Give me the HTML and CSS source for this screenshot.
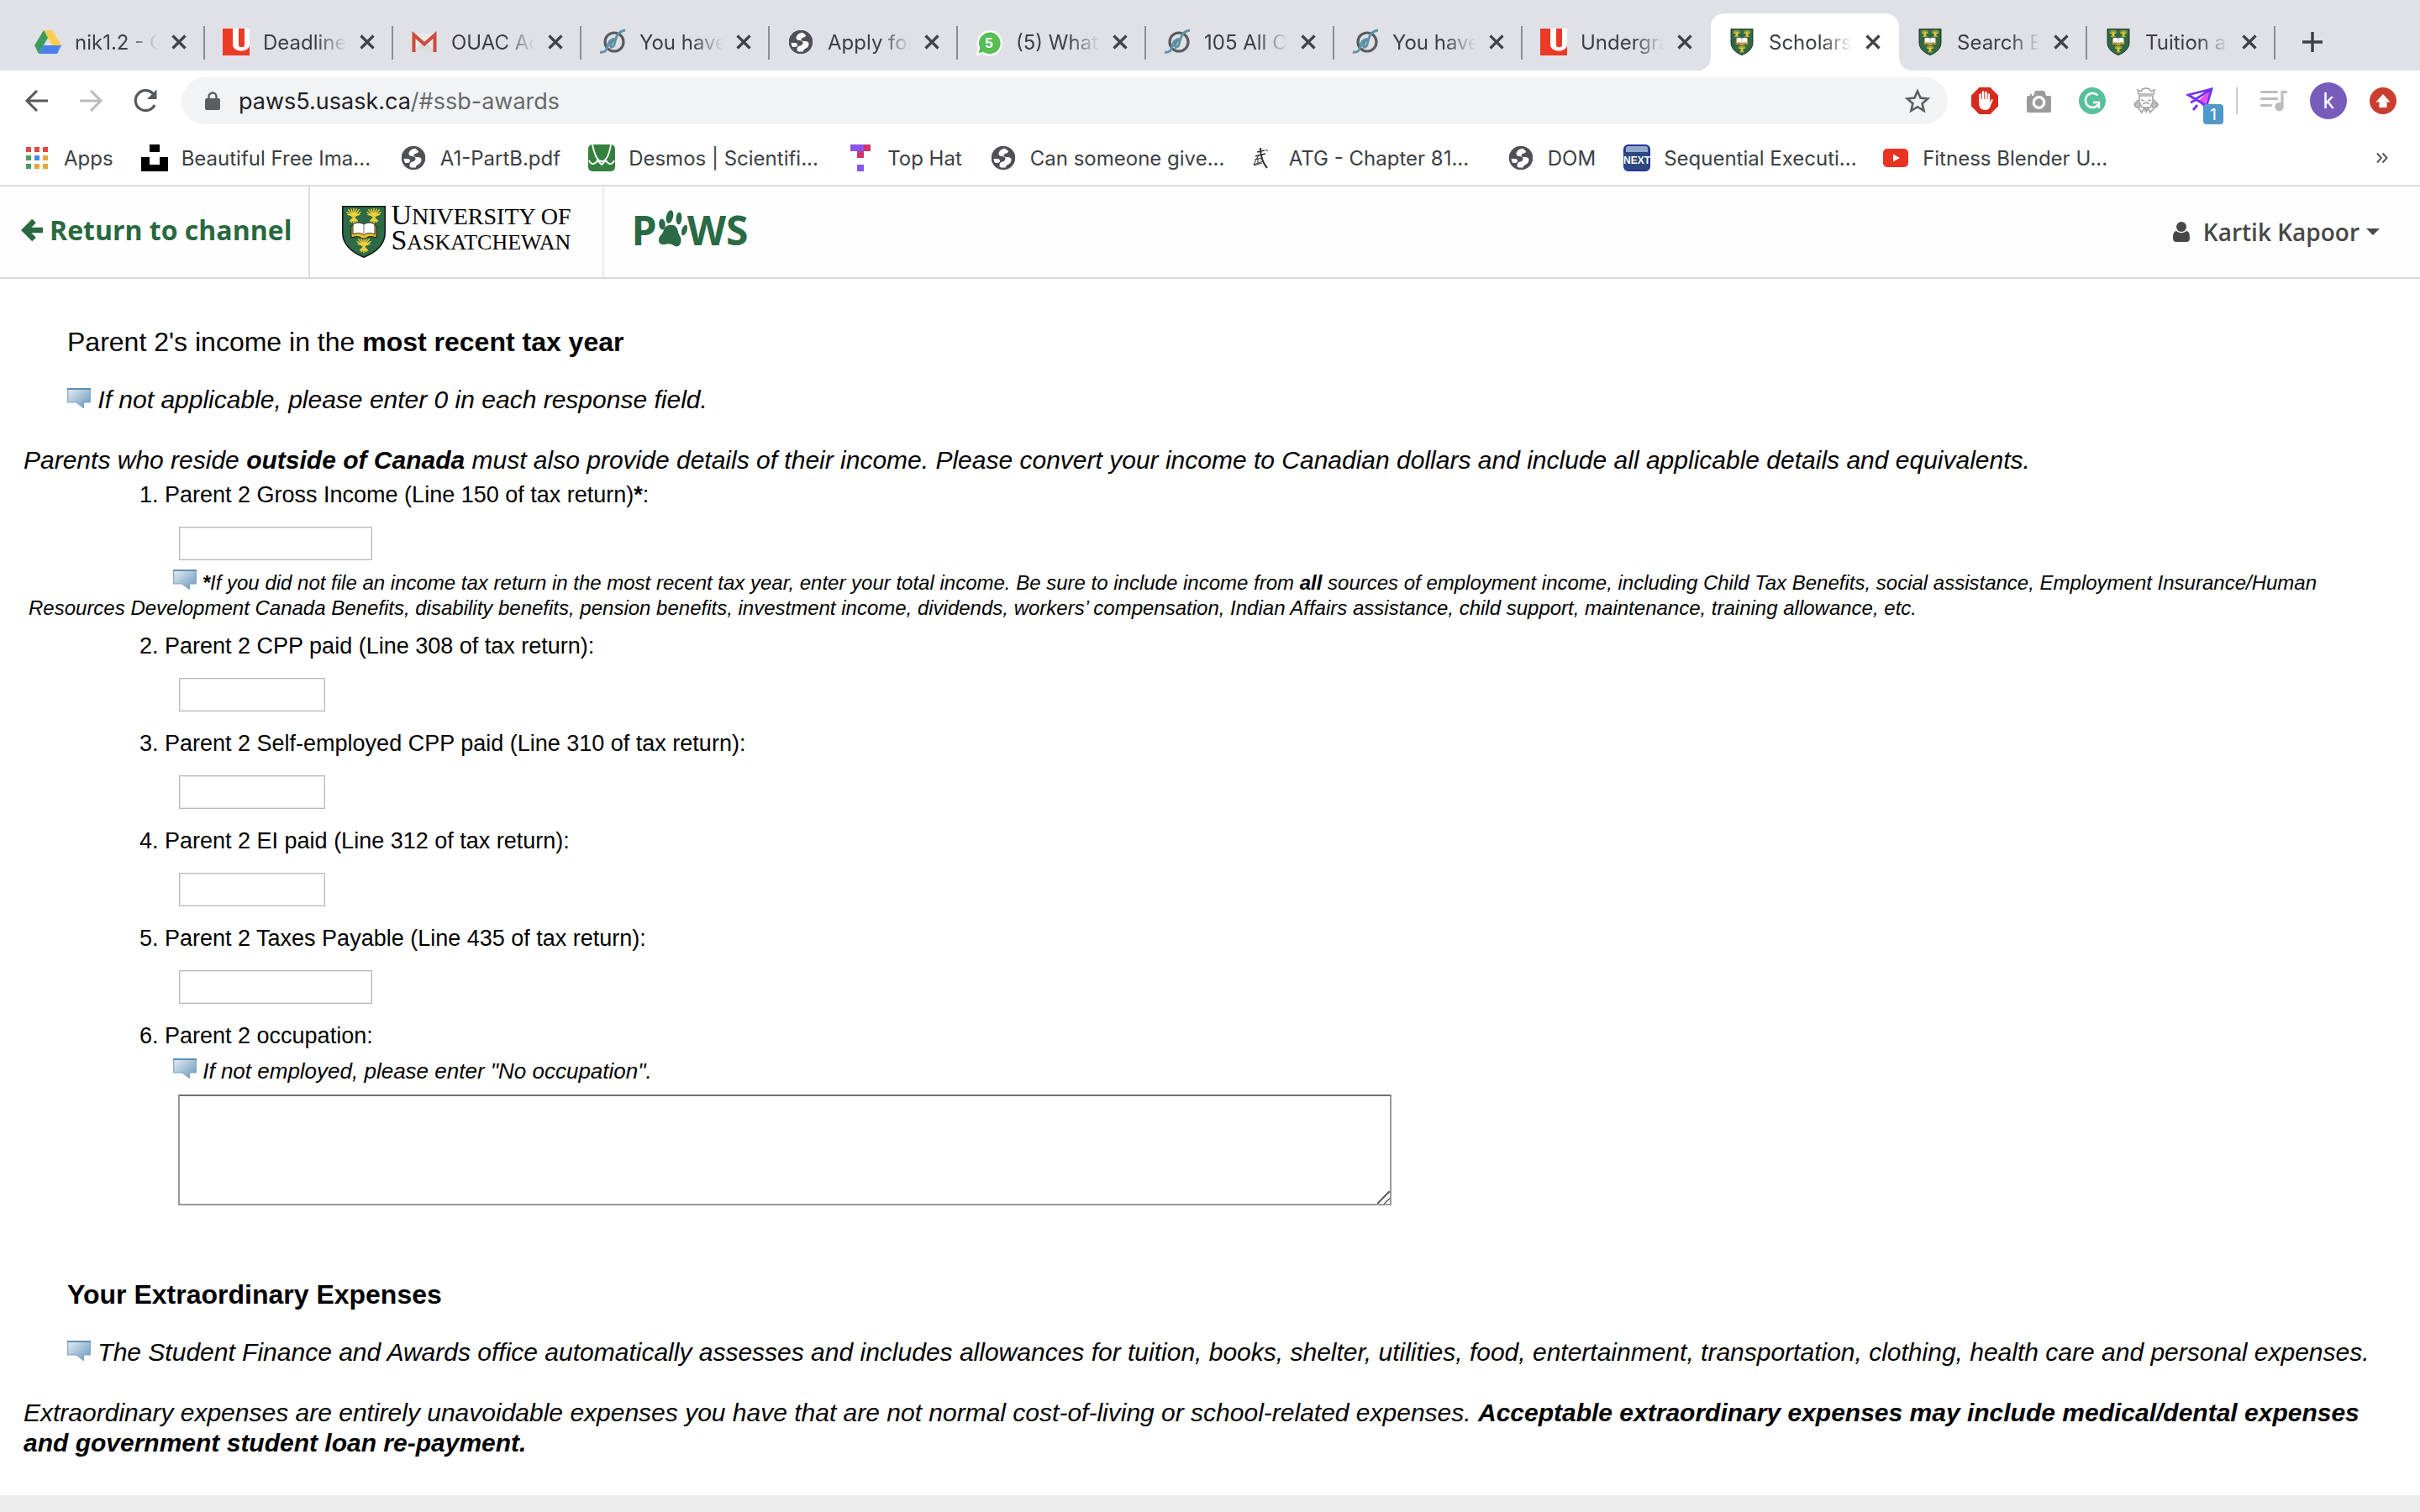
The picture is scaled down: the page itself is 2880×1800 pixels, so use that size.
FILE: index.html
```html
<!DOCTYPE html>
<html lang="en">
<head>
<meta charset="utf-8">
<meta name="viewport" content="width=device-width, initial-scale=1">
<title>Scholarships and awards</title>
<link rel="stylesheet" href="styles.css">
</head>
<body>
<svg class="defs" aria-hidden="true">
  <symbol id="close" viewBox="0 0 18 18"><path d="M1.500 1.500l15 15M16.500 1.500l-15 15" stroke="#3f4246" stroke-width="3.200"/></symbol>
  <symbol id="globe" viewBox="0 0 32 32"><circle cx="16" cy="16" r="14" fill="#505158"/><path d="M18 4.500c-4 1-7 3-7.500 6-.3 2 1.500 3.500 3.500 3.500 3 0 4.500 1 4.500 3s-1 3-3.500 3.500-3.500 2-3.500 4.500l.5 3c2 .8 5 .8 7 0-.5-2 .5-3 2.500-4 3-1.500 4-3.500 4-6 0-2-2-3-4.500-3-3 0-4.500-.5-4.500-2 0-1.300 1-2 3-2.500 2-.6 2.500-1.500 2.500-2.500z" fill="#fff"/><path d="M3 17h6c2 0 3 1 3 2.500S10.500 22 9 22H4.500z" fill="#fff"/><circle cx="16" cy="16" r="12.800" fill="none" stroke="#505158" stroke-width="2.600"/></symbol>
  <symbol id="u-logo" viewBox="0 0 32 32"><path d="M0 0h32v32H0z" fill="#ec3a25"/><path d="M12 0v19c0 10 20 10 20 0V0h-6v20c0 3-7 3-7 0V0z" fill="#fff"/></symbol>
  <symbol id="leaf" viewBox="0 0 32 32"><circle cx="18" cy="16" r="11" fill="none" stroke="#595b5e" stroke-width="3.200"/><path d="M1 28c6 1 8-2 9-7 1-4 3-7 6-8l-3 9M13 22c5 1 5-3 6-7 2-8 5-12 12-13" fill="none" stroke="#5f93a6" stroke-width="3"/><path d="M11 19c3-4 6-6 10-7" stroke="#5f93a6" stroke-width="2"/></symbol>
  <symbol id="wheat" viewBox="0 0 20 19"><path d="M10 10L1 4.500M10 10L3 1.500M10 10L6.500.5M10 10V0M10 10L13.500.5M10 10L17 1.500M10 10l9-5.500M10 10L2 7.500M10 10l8-2.500" stroke="#f3cf3b" stroke-width="1.500"/><path d="M7 10h6M10 11l-3 7M10 11v8M10 11l3 7M10 11l-5 5.500M10 11l5 5.500" stroke="#f3cf3b" stroke-width="1.700"/></symbol>
  <symbol id="shield" viewBox="0 0 52 62"><path d="M.8.800h50.400V32c0 14-10 23-25.200 29.200C10.800 55 .8 46 .8 32z" fill="#2d6a45" stroke="#151c17" stroke-width="1.600"/><use href="#wheat" x="4" y="3" width="20" height="18"/><use href="#wheat" x="28" y="3" width="20" height="18"/><use href="#wheat" x="16" y="38" width="20" height="18"/><path d="M11 24c5-3 11-3 15 0 4-3 10-3 15 0v14c-6-2-10-2-13 1h-4c-3-3-7-3-13-1z" fill="#eebf2c" stroke="#151c17"/><path d="M13 22c5-3 10-2 13 0 3-2 8-3 13 0v12c-5-2-10-2-13 1-3-3-8-3-13-1z" fill="#fff" stroke="#151c17" stroke-width=".9"/><path d="M26 22v13" stroke="#777"/></symbol>
  <linearGradient id="bubble-fill" x1="0" y1="0" x2="1" y2="1"><stop offset="0" stop-color="#e6edf3"/><stop offset="1" stop-color="#6595ba"/></linearGradient>
  <symbol id="bubble" viewBox="0 0 28 24"><path d="M.7 1h26.600v16H19.500V23.500L11 17H.7z" fill="url(#bubble-fill)" stroke="#7fa6c5" stroke-width="1.200"/><path d="M0 1h28" stroke="#5f8fb5" stroke-width="2"/></symbol>
</svg>

<header class="browser">
  <nav class="tabs" aria-label="Open tabs">
    <div class="tab"><svg class="fav" viewBox="0 0 32 32"><path d="M11 2h10l11 18H21z" fill="#fbcd4c"/><path d="M11 2l5 9L5 30 0 20z" fill="#3e9b5c"/><path d="M10.500 20H32l-5 10H5z" fill="#4a80ec"/></svg><span class="tab-title">nik1.2 - G</span><button class="icon-btn" aria-label="Close tab"><svg class="x"><use href="#close"/></svg></button></div>
    <div class="tab"><svg class="fav"><use href="#u-logo"/></svg><span class="tab-title">Deadlines</span><button class="icon-btn" aria-label="Close tab"><svg class="x"><use href="#close"/></svg></button></div>
    <div class="tab"><svg class="fav" viewBox="0 0 32 32"><path d="M3 6h26v21H3z" fill="#e9e9e7"/><path d="M3 27l13-12 13 12z" fill="#dcdcda"/><path d="M3.500 28V7.500L16 18.500l12.500-11V28" fill="none" stroke="#d04a3c" stroke-width="4"/></svg><span class="tab-title">OUAC Ac</span><button class="icon-btn" aria-label="Close tab"><svg class="x"><use href="#close"/></svg></button></div>
    <div class="tab"><svg class="fav"><use href="#leaf"/></svg><span class="tab-title">You have</span><button class="icon-btn" aria-label="Close tab"><svg class="x"><use href="#close"/></svg></button></div>
    <div class="tab"><svg class="fav"><use href="#globe"/></svg><span class="tab-title">Apply for</span><button class="icon-btn" aria-label="Close tab"><svg class="x"><use href="#close"/></svg></button></div>
    <div class="tab"><svg class="fav" viewBox="0 0 32 32"><path d="M2 31l2-8A14 14 0 1 1 9 29z" fill="#55bf54" stroke="#fff" stroke-width="2.400"/><text x="16" y="22.500" class="wa-count">5</text></svg><span class="tab-title">(5) Whats</span><button class="icon-btn" aria-label="Close tab"><svg class="x"><use href="#close"/></svg></button></div>
    <div class="tab"><svg class="fav"><use href="#leaf"/></svg><span class="tab-title">105 All C</span><button class="icon-btn" aria-label="Close tab"><svg class="x"><use href="#close"/></svg></button></div>
    <div class="tab"><svg class="fav"><use href="#leaf"/></svg><span class="tab-title">You have</span><button class="icon-btn" aria-label="Close tab"><svg class="x"><use href="#close"/></svg></button></div>
    <div class="tab plain"><svg class="fav"><use href="#u-logo"/></svg><span class="tab-title">Undergra</span><button class="icon-btn" aria-label="Close tab"><svg class="x"><use href="#close"/></svg></button></div>
    <div class="tab active"><svg class="fav"><use href="#shield"/></svg><span class="tab-title">Scholars</span><button class="icon-btn" aria-label="Close tab"><svg class="x"><use href="#close"/></svg></button></div>
    <div class="tab"><svg class="fav"><use href="#shield"/></svg><span class="tab-title">Search E</span><button class="icon-btn" aria-label="Close tab"><svg class="x"><use href="#close"/></svg></button></div>
    <div class="tab"><svg class="fav"><use href="#shield"/></svg><span class="tab-title">Tuition a</span><button class="icon-btn" aria-label="Close tab"><svg class="x"><use href="#close"/></svg></button></div>
    <button class="icon-btn new-tab" aria-label="New tab"><svg class="i24" viewBox="0 0 24 24"><path d="M12 0v24M0 12h24" stroke="#3c4043" stroke-width="3.400"/></svg></button>
  </nav>

  <div class="toolbar">
    <div class="nav-buttons">
      <button class="icon-btn" aria-label="Back"><svg class="i32" viewBox="0 0 32 32" fill="none" stroke="#55585d" stroke-width="3"><path d="M29 16H4M16 4L4 16l12 12"/></svg></button>
      <button class="icon-btn" aria-label="Forward"><svg class="i32" viewBox="0 0 32 32" fill="none" stroke="#babcbe" stroke-width="3"><path d="M3 16h25M16 4l12 12-12 12"/></svg></button>
      <button class="icon-btn" aria-label="Reload"><svg class="i32" viewBox="0 0 32 32"><path d="M28 21A12 12 0 1 1 26.500 8" fill="none" stroke="#55585d" stroke-width="3.200"/><path d="M30.500 2.500V14H19z" fill="#55585d"/></svg></button>
    </div>
    <div class="omnibox">
      <svg class="lock" viewBox="0 0 18 22"><rect y="8" width="18" height="14" rx="2" fill="#5b5e62"/><path d="M4.500 9V6a4.500 4.500 0 0 1 9 0v3" fill="none" stroke="#5b5e62" stroke-width="2.400"/></svg>
      <a class="url" href="#ssb-awards">paws5.usask.ca<span class="url-path">/#ssb-awards</span></a>
      <button class="icon-btn" aria-label="Bookmark this page"><svg class="i32" viewBox="0 0 32 32"><path d="M16 4.500l3.500 8.100 8.700.8-6.600 5.800 2 8.600-7.600-4.600-7.600 4.600 2-8.600-6.600-5.800 8.700-.8z" fill="none" stroke="#5b5e62" stroke-width="2.600"/></svg></button>
    </div>
    <div class="extensions">
      <button class="icon-btn" aria-label="Ad blocker"><svg class="i32" viewBox="0 0 32 32"><path d="M9.500 0h13L32 9.500v13L22.500 32h-13L0 22.500v-13z" fill="#d52b1e"/><path d="M10.500 16V8.500M14 14V5.500M17.500 14V6M20.800 15V8.500" stroke="#fff" stroke-width="2.500" stroke-linecap="round"/><path d="M9.300 14h12.800v4l1.500-3c1-1.500 2.400-1 2 .5l-3.500 8.500c-1 2-3 3-5.500 3-4.500 0-7.300-3-7.300-7z" fill="#fff"/></svg></button>
      <button class="icon-btn" aria-label="Screenshot"><svg class="i32" viewBox="0 0 32 32"><path d="M4 10h2V8h2v2h2l2-6h11l2 6h4q2 0 2 2v16q0 2-2 2H4q-2 0-2-2V12q0-2 2-2z" fill="#9b9b9b"/><circle cx="16.500" cy="18" r="6.300" fill="none" stroke="#fff" stroke-width="3.200"/></svg></button>
      <button class="icon-btn" aria-label="Grammar check"><svg class="i32" viewBox="0 0 32 32"><circle cx="16" cy="16" r="16" fill="#59c09d"/><path d="M22.500 9.500A8.500 8.500 0 1 0 23.500 20" fill="none" stroke="#fff" stroke-width="2.500"/><path d="M17 18h7v7" fill="none" stroke="#fff" stroke-width="2.500"/></svg></button>
      <button class="icon-btn" aria-label="King"><svg class="i32" viewBox="0 0 32 32" fill="none" stroke="#a8a8a8" stroke-width="1.700"><path d="M7 8L6 3l4 2 2-3 4-1 4 1 2 3 4-2-1 5zM8 10v8l3 6h10l3-6v-8z"/><path d="M10 15l4 1M22 15l-4 1M12 20l4-2 4 2"/><path d="M8 15c-4 0-3 3-6 5 0 4 4 3 5 5l4 5 2-4M24 15c4 0 3 3 6 5 0 4-4 3-5 5l-4 5-2-4"/><circle cx="6" cy="21" r="3" fill="#c6c6c6"/><circle cx="26" cy="21" r="3" fill="#c6c6c6"/><path d="M13 24l3 5 3-5z" fill="#b4b4b4"/></svg></button>
      <button class="icon-btn badged" aria-label="Send, 1 new"><svg class="i32" viewBox="0 0 32 32"><path d="M29 3L14 16l7 8z" fill="#e94ff0"/><path d="M2 9L30 2l-6 20-10-6zM2 9l9 5L30 2M11 15l-6 3M13 21l-5 6" fill="none" stroke="#7434e8" stroke-width="2.800"/></svg><span class="badge">1</span></button>
      <span class="divider"></span>
      <button class="icon-btn" aria-label="Media"><svg class="i32" viewBox="0 0 32 32"><path d="M1.500 5.500h18M1.500 13.500h18M1.500 21.500h11M31 5.500h-5V22" fill="none" stroke="#bcbdc0" stroke-width="3.200" stroke-linecap="round"/><circle cx="22.500" cy="23" r="5.200" fill="#bcbdc0"/></svg></button>
      <button class="avatar" aria-label="Profile">k</button>
      <button class="icon-btn" aria-label="Update"><svg class="i32" viewBox="0 0 32 32"><circle cx="16" cy="16" r="16" fill="#c93e2f"/><path d="M16 8l8.500 9.500h-4V24h-9v-6.500h-4z" fill="#fff"/></svg></button>
    </div>
  </div>

  <nav class="bookmarks" aria-label="Bookmarks">
    <a href="#apps"><svg class="i32" viewBox="0 0 32 32"><path d="M3 3h6v6H3zM13 3h6v6h-6zM23 3h6v6h-6z" fill="#e04a3f"/><path d="M3 13h6v6H3zM3 23h6v6H3z" fill="#4c9d60"/><path d="M13 13h6v6h-6z" fill="#4787ee"/><path d="M23 13h6v6h-6zM13 23h6v6h-6zM23 23h6v6h-6z" fill="#eaa53a"/></svg>Apps</a>
    <a class="wide" href="#images"><svg class="i32" viewBox="0 0 32 32"><path d="M10 0h12v9H10zM0 15h10v9h12v-9h10v17H0z"/></svg>Beautiful Free Ima...</a>
    <a href="#a1"><svg class="i32"><use href="#globe"/></svg>A1-PartB.pdf</a>
    <a class="wide" href="#desmos"><svg class="i32" viewBox="0 0 32 32"><rect width="32" height="32" rx="5" fill="#35803f"/><path d="M5 0c3 14 6 20 11 20S25 12 27 0M1 19c3 6 7 5 10 0l5 5 5-5c3 5 7 6 10 0" fill="none" stroke="#fff" stroke-width="1.800"/></svg>Desmos | Scientifi...</a>
    <a href="#tophat"><svg class="i32" viewBox="0 0 32 32"><path d="M4 0h16v8H4zM12 24h8v8h-8z" fill="#8a55ea"/><path d="M20 0h8v8h-8zM12 8h8v8h-8z" fill="#d0356f"/></svg>Top Hat</a>
    <a class="wide" href="#can"><svg class="i32"><use href="#globe"/></svg>Can someone give...</a>
    <a class="wide" href="#atg"><svg class="i32" viewBox="0 0 32 32" fill="none" stroke="#333"><path d="M10 9l9-2M8 14l12-3" stroke-width="1.300"/><path d="M14 4c0 8 2 17 8 24" stroke-width="2"/><path d="M12 12L6 24l11-4M7 18l10-2M11 16v7M20 6l3 2M6 25l10-3" stroke-width="1"/></svg>ATG - Chapter 81...</a>
    <a href="#dom"><svg class="i32"><use href="#globe"/></svg>DOM</a>
    <a class="wide" href="#next"><svg class="i32" viewBox="0 0 32 32"><rect x=".7" y=".7" width="30.600" height="30.600" rx="5" fill="#2d4a80" stroke="#2230a8" stroke-width="1.400"/><path d="M3 5q0-3 3-3h20q3 0 3 3v4H3z" fill="#93a8cc"/><text x="16" y="23" class="next-word">NEXT</text></svg>Sequential Executi...</a>
    <a class="wide" href="#fitness"><svg class="i32" viewBox="0 0 32 32"><rect x="1" y="5" width="30" height="22" rx="5" fill="#ea3323"/><path d="M13 11.500v9l8-4.500z" fill="#fff"/></svg>Fitness Blender U...</a>
    <button class="icon-btn more" aria-label="More bookmarks"><svg class="i14" viewBox="0 0 14 14"><path d="M1 1.500L6 7l-5 5.500M7.500 1.500l5 5.500-5 5.500" fill="none" stroke="#55585d" stroke-width="2"/></svg></button>
  </nav>
</header>

<header class="site">
  <a class="return" href="#channel"><svg class="arrow" viewBox="0 0 26 28"><path d="M15.500 3L4.500 14l11 11M5 14h21" fill="none" stroke="#28693f" stroke-width="6.500"/></svg>Return to channel</a>
  <a class="brand" href="#usask" aria-label="University of Saskatchewan"><svg class="crest"><use href="#shield"/></svg><span class="wordmark"><span class="word-top"><span class="cap">U</span>NIVERSITY OF</span><span class="word-bottom"><span class="cap">S</span>ASKATCHEWAN</span></span></a>
  <a class="paws" href="#paws" aria-label="PAWS">P<svg class="paw" viewBox="0 0 36 48" fill="#2a6a45"><ellipse cx="6" cy="18" rx="3.800" ry="6.500" transform="rotate(-6 6 18)"/><ellipse cx="15" cy="9" rx="4" ry="8" transform="rotate(14 15 9)"/><ellipse cx="26" cy="11" rx="3.400" ry="7.300" transform="rotate(4 26 11)"/><ellipse cx="32.500" cy="25" rx="3" ry="6.500" transform="rotate(18 32.500 25)"/><path d="M15 19c6-1 9 2 10 8 1 4 4 6 3.500 11-.5 6-5 8-9 5-4-2-6-2-10-1-6 1-9-3-7-8 1-3 4-4 5-8 1-4 3-6.500 7.500-7z"/></svg>WS</a>
  <button class="user"><svg class="person" viewBox="0 0 20 24" fill="#484848"><circle cx="10" cy="6" r="6"/><path d="M4 11c4 3 8 3 12 0 3 .5 4 3.500 4 8.500 0 3-1.500 4.500-4 4.500H4c-2.500 0-4-1.500-4-4.500C0 14.500 1 11.500 4 11z"/></svg>Kartik Kapoor<svg class="caret" viewBox="0 0 16 8"><path d="M0 0h16L8 8z" fill="#484848"/></svg></button>
</header>

<main>
  <section>
    <h2 class="plain-head">Parent 2's income in the <b>most recent tax year</b></h2>
    <p class="lead"><svg class="tip"><use href="#bubble"/></svg> If not applicable, please enter 0 in each response field.</p>
    <p>Parents who reside <b>outside of Canada</b> must also provide details of their income. Please convert your income to Canadian dollars and include all applicable details and equivalents.</p>
    <ol>
      <li class="annotated"><label for="gross">Parent 2 Gross Income (Line 150 of tax return)<b>*</b>:</label><input id="gross" class="long" type="text">
        <p class="note full"><svg class="tip"><use href="#bubble"/></svg> <b>*</b>If you did not file an income tax return in the most recent tax year, enter your total income. Be sure to include income from <b>all</b> sources of employment income, including Child Tax Benefits, social assistance, Employment Insurance/Human Resources Development Canada Benefits, disability benefits, pension benefits, investment income, dividends, workers’ compensation, Indian Affairs assistance, child support, maintenance, training allowance, etc.</p></li>
      <li><label for="cpp">Parent 2 CPP paid (Line 308 of tax return):</label><input id="cpp" type="text"></li>
      <li><label for="self-cpp">Parent 2 Self-employed CPP paid (Line 310 of tax return):</label><input id="self-cpp" type="text"></li>
      <li><label for="ei">Parent 2 EI paid (Line 312 of tax return):</label><input id="ei" type="text"></li>
      <li><label for="taxes">Parent 2 Taxes Payable (Line 435 of tax return):</label><input id="taxes" class="long" type="text"></li>
      <li><label for="occupation">Parent 2 occupation:</label>
        <p class="note short"><svg class="tip"><use href="#bubble"/></svg> If not employed, please enter "No occupation".</p>
        <textarea id="occupation"></textarea></li>
    </ol>
  </section>
  <section>
    <h2>Your Extraordinary Expenses</h2>
    <p class="lead"><svg class="tip"><use href="#bubble"/></svg> The Student Finance and Awards office automatically assesses and includes allowances for tuition, books, shelter, utilities, food, entertainment, transportation, clothing, health care and personal expenses.</p>
    <p>Extraordinary expenses are entirely unavoidable expenses you have that are not normal cost-of-living or school-related expenses. <b>Acceptable extraordinary expenses may include medical/dental expenses and government student loan re-payment.</b></p>
  </section>
</main>
</body>
</html>
```
FILE: styles.css
```css
* { box-sizing: border-box; }
html { background: #ededed; }
body { margin: 0; font-family: "Liberation Sans", Arial, sans-serif; color: #000; }
button { font: inherit; color: inherit; border: 0; background: none; padding: 0; }
a { color: inherit; text-decoration: none; }
svg { flex: none; }
.defs { position: absolute; width: 0; height: 0; }

/* Icon sizes */
.icon-btn { display: flex; flex: none; }
.i32, .fav { width: 32px; height: 32px; }
.i24 { width: 24px; height: 24px; }
.i14 { width: 14px; height: 14px; }
.x { width: 18px; height: 18px; }

/* Browser frame */
.browser { background: #fff; border-bottom: 2px solid #dcdce1; font-family: Inter, sans-serif; font-size: 24px; color: #3c4043; }

.tabs { display: flex; align-items: stretch; background: #dfe1e6; padding: 16px 20px 0; height: 84px; }
.tab { position: relative; flex: 0 1 224px; min-width: 0; display: flex; align-items: center; gap: 16px; padding: 0 22px 0 21px; }
.tab::after { content: ""; position: absolute; right: 0; top: 15px; width: 2px; height: 40px; background: #8b8d92; }
.tab.plain::after { display: none; }
.tab-title { flex: 1; min-width: 0; overflow: hidden; white-space: nowrap; mask-image: linear-gradient(90deg, #000 64%, transparent); }
.tab.active { background: #fff; border-radius: 16px 16px 0 0; }
.tab.active::before, .tab.active::after { content: ""; position: absolute; top: auto; bottom: 0; width: 16px; height: 16px; }
.tab.active::before { left: -16px; background: radial-gradient(circle at 0 0, transparent 16px, #fff 16px); }
.tab.active::after { right: -16px; background: radial-gradient(circle at 100% 0, transparent 16px, #fff 16px); }
.new-tab { align-self: center; margin-left: 32px; }
.wa-count { font: 700 17px "Liberation Sans", sans-serif; fill: #fff; text-anchor: middle; }

.toolbar { display: flex; align-items: center; gap: 28px; height: 72px; padding: 0 28px; }
.nav-buttons { display: flex; gap: 32px; }
.omnibox { flex: 1; min-width: 0; height: 56px; border-radius: 28px; background: #f1f3f4; display: flex; align-items: center; gap: 22px; padding: 0 20px 0 28px; }
.lock { width: 18px; height: 22px; }
.url { flex: 1; font-size: 27px; color: #202124; }
.url-path { color: #66696d; }
.extensions { display: flex; align-items: center; gap: 27px; }
.extensions .icon-btn:nth-child(-n+4) { margin-right: 5px; }
.divider { width: 2px; height: 32px; background: #c8cacd; }
.badged { position: relative; }
.badge { position: absolute; left: 20px; top: 20px; width: 24px; height: 24px; border-radius: 4px; background: #4f98c9; color: #fff; font-size: 18px; line-height: 26px; font-weight: 500; text-align: center; }
.avatar { width: 44px; height: 44px; border-radius: 50%; background: #785cba; color: #fff; font: 26px Roboto, sans-serif; }

.bookmarks { display: flex; align-items: center; gap: 33px; height: 64px; padding: 0 38px 0 28px; white-space: nowrap; }
.bookmarks a { display: flex; align-items: center; gap: 16px; }
.bookmarks .wide { width: 275px; }
.next-word { font: 700 12px "Liberation Sans", sans-serif; fill: #fff; text-anchor: middle; }
.more { margin-left: auto; }

/* Site header */
.site { display: flex; background: #fefefe; height: 110px; border-bottom: 2px solid #d8d9dc; font-family: "Open Sans", sans-serif; }
.return { display: flex; align-items: center; gap: 8px; padding: 0 20px 6px 25px; border-right: 2px solid #dcdcdc; font-size: 32px; font-weight: 700; color: #28693f; white-space: nowrap; }
.arrow { width: 26px; height: 28px; margin-top: 2px; }
.brand { display: flex; align-items: center; gap: 6px; padding: 0 38px; border-right: 2px solid #ebebeb; color: #000; }
.crest { width: 52px; height: 62px; }
.wordmark { display: flex; flex-direction: column; font-family: "Liberation Serif", "Times New Roman", serif; line-height: 28px; padding-bottom: 8px; white-space: nowrap; }
.word-top { font-size: 28px; }
.word-bottom { font-size: 26px; }
.cap { font-size: 34px; line-height: 28px; }
.paws { display: flex; align-items: center; padding: 0 32px 6px; font-size: 48px; font-weight: 700; color: #2a6a45; }
.paw { width: 36px; height: 48px; }
.user { display: flex; align-items: center; margin-left: auto; padding: 0 48px 0 0; font-size: 28px; font-weight: 600; color: #484848; }
.person { width: 20px; height: 24px; margin-right: 16px; }
.caret { width: 16px; height: 8px; margin-left: 8px; }

/* Form */
main { background: #fff; padding: 57px 28px 44px; }
h2 { margin: 0 52px 33px; font-size: 32px; line-height: 36px; font-weight: 700; }
.plain-head { font-weight: 400; }
p { margin: 0; font-size: 30px; line-height: 36px; font-style: italic; }
.lead { margin: 0 -24px 36px 52px; }
.tip { display: inline-block; width: 28px; height: 24px; vertical-align: baseline; }
ol { margin: 7px 0 88px; padding-left: 168px; font-size: 27px; line-height: 32px; }
li { margin-bottom: 22px; }
li.annotated { margin-bottom: 14px; }
li:last-child { margin-bottom: 0; }
label { display: block; }
input { display: block; width: 174px; height: 40px; margin: 22px 0 0 17px; padding: 0 8px; border: 1px solid #b9b9b9; border-radius: 0; background: #fff; box-shadow: inset 0 0 0 1px #e6e6e6; font: inherit; }
input.long { width: 230px; }
.note { margin: 11px 0 0 10px; font-size: 24px; line-height: 30px; }
.note.full { margin-left: -162px; text-indent: 172px; }
.note.short { font-size: 26px; }
textarea { display: block; width: 1444px; max-width: 100%; height: 132px; margin: 13px 0 0 16px; padding: 8px; border: 2px solid #999; border-top-color: #707070; border-radius: 0; background: #fff; font: inherit; resize: both; }
textarea::-webkit-resizer { background: linear-gradient(135deg, transparent 46%, #666 46%, #666 54%, transparent 54%, transparent 74%, #666 74%, #666 82%, transparent 82%); }
```
